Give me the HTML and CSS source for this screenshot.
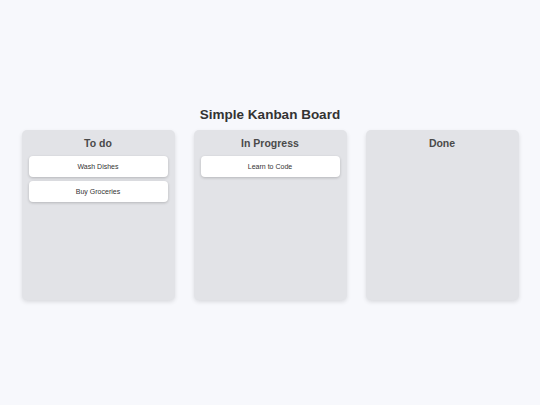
FILE: index.html
```html
<!DOCTYPE html>
<html lang="en">

<head>
    <meta charset="UTF-8">
    <meta name="viewport" content="width=device-width, initial-scale=1.0">
    <title>Simple Kanban Board</title>
    <link rel="stylesheet" href="styles.css">
</head>

<body>
    <div id="kanban">
        <h1>Simple Kanban Board</h1>
        <div class="board">
            <div class="column">
                <h2>To do</h2>
                <div class="card">Wash Dishes</div>
                <div class="card">Buy Groceries</div>
            </div>
            <div class="column">
                <h2>In Progress</h2>
                <div class="card">Learn to Code</div>
            </div>
            <div class="column">
                <h2>Done</h2>
            </div>
        </div>
    </div>
</body>

</html>
```

FILE: styles.css
```css
* {
    box-sizing: border-box;
    padding: 0;
    margin: 0;
}

body {
    background-color: #f7f8fc;
    font-family: "Liberation Sans", Arial, sans-serif;
    color: #333;
}

#kanban {
    height: 100vh;
    display: flex;
    flex-direction: column;
    justify-content: center;
    align-items: center;
    padding-top: 1px;
}

#kanban h1 {
    font-size: 13.5px;
    line-height: 16px;
    color: #333;
    margin-bottom: 7px;
}

.board {
    width: 497px;
    display: flex;
    gap: 19px;
}

.column {
    flex: 1;
    height: 170px;
    padding: 7px;
    border-radius: 5px;
    background-color: #e2e3e7;
    /* bóng mờ nhẹ phía dưới */
    box-shadow: 0 2px 4px rgba(0, 0, 0, 0.12);
}

.column h2 {
    font-size: 10.5px;
    line-height: 12px;
    text-align: center;
    color: #4a4a4a;
    margin-bottom: 7px;
}

.card {
    height: 21px;
    line-height: 21px;
    margin-bottom: 4px;
    border-radius: 4px;
    background-color: #fff;
    font-size: 7px;
    text-align: center;
    color: #333;
    box-shadow: 0 1px 3px rgba(0, 0, 0, 0.2);
}
```
